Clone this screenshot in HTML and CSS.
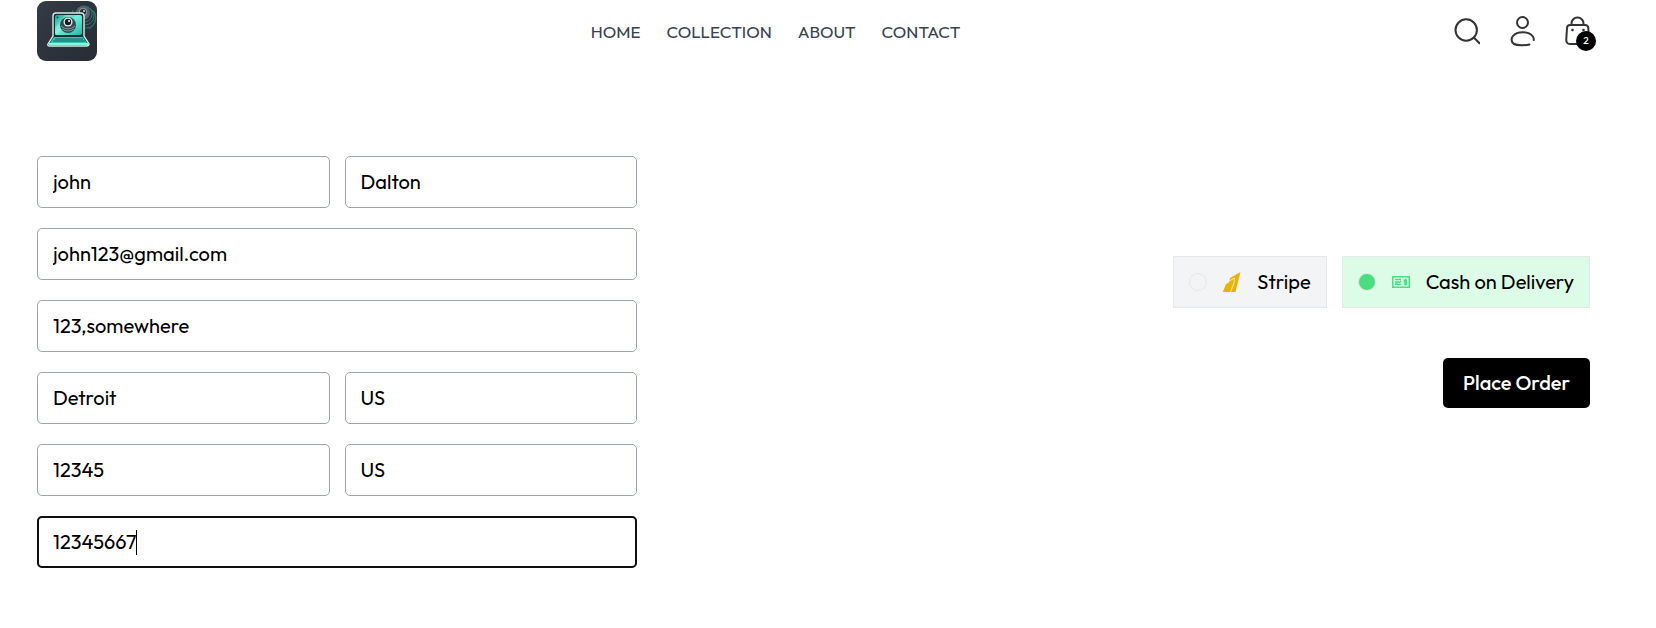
FILE: index.html
```html
<!DOCTYPE html>
<html lang="en">
<head>
<meta charset="utf-8">
<meta name="viewport" content="width=device-width, initial-scale=1">
<title>Place Order</title>
<link rel="stylesheet" href="styles.css">
</head>
<body>
<header class="header">
  <a class="logo" href="#" aria-label="Home">
    <svg viewBox="0 0 60 60" width="60" height="60" aria-hidden="true">
      <defs>
        <linearGradient id="tile" x1="0" y1="0" x2="1" y2="1"><stop offset="0" stop-color="#343b44"/><stop offset="1" stop-color="#272c35"/></linearGradient>
        <linearGradient id="screen" x1="0" y1="0" x2="1" y2="1"><stop offset="0" stop-color="#1fa294"/><stop offset=".45" stop-color="#6df0d8"/><stop offset="1" stop-color="#23b5a4"/></linearGradient>
      </defs>
      <rect width="60" height="60" rx="9" fill="url(#tile)"/>
      <g fill="none" stroke="#2c7473" stroke-width="1">
        <circle cx="47" cy="13" r="8"/><circle cx="48" cy="15" r="9"/><circle cx="49" cy="17" r="10"/><path d="M36 9a10 10 0 0 0 5 14M57 10c3 7 1 15-5 18"/>
      </g>
      <circle cx="46" cy="12" r="7" fill="#59636b"/><circle cx="46" cy="11" r="4" fill="#8d979c"/><circle cx="46" cy="11" r="3" fill="#20262d"/><circle cx="47" cy="10" r="1" fill="#dce4e5"/>
      <path d="M19 12h25q3 0 3 3v20l5 8q0 2-3 2H13q-3 0-2-2l5-8V15q0-3 3-3z" fill="#172c32" stroke="#d5eee9" stroke-width="1.4"/>
      <rect x="18" y="14" width="27" height="20" rx="2" fill="url(#screen)"/>
      <path d="M28 14h7L20 34h-2v-7z" fill="#a2f7e7" opacity=".4"/>
      <path d="M17 36h29l4 6H13z" fill="#32c8b4"/><path d="M18 38h28M16 40h32" stroke="#17595a" stroke-width="1"/>
      <path d="M12 43h39" stroke="#8cf3df" stroke-width="2"/>
      <circle cx="31" cy="24" r="8" fill="#344850"/><path d="M24 25q7 6 14 0M25 28q6 4 12 0" fill="none" stroke="#819b9d"/>
      <circle cx="31" cy="21" r="4.5" fill="#eaf3ef"/><circle cx="31" cy="21" r="3.2" fill="#111e2a"/><circle cx="32" cy="20" r="1" fill="#fff"/><circle cx="20.500" cy="16.500" r="1" fill="#0d5754"/>
    </svg>
  </a>
  <nav class="nav" aria-label="Main">
    <a href="#">HOME</a><a href="#">COLLECTION</a><a href="#">ABOUT</a><a href="#">CONTACT</a>
  </nav>
  <div class="actions">
    <button class="icon-button" type="button" aria-label="Search">
      <svg viewBox="-1 0 26 32" width="26" height="32"><circle cx="11.200" cy="15" r="10.700"/><path d="m18.800 22.500 5.700 5.700"/></svg>
    </button>
    <button class="icon-button" type="button" aria-label="Account">
      <svg viewBox="-1 -1 26 32" width="26" height="32"><circle cx="12.500" cy="6.500" r="5.500"/><path d="M19.500 28.500c-4 1-12.500 1-15.500-.5-3-1.500-3-6-1-8 4-5 15.500-5 19.500 0q1.500 1.800 1.200 4"/></svg>
    </button>
    <a class="icon-button cart" href="#" aria-label="Cart, 2 items">
      <svg viewBox="-1 -1 26 32" width="26" height="32"><path d="M6.500 9V7.500a6 6 0 0 1 12 0V9M5 9h15q3 0 3.300 3l.7 11q.2 5-4 5H5q-4 0-3.700-5L2 12q.2-3 3-3z"/><circle class="dot" cx="7.500" cy="14" r="1.300"/><circle class="dot" cx="18.500" cy="14" r="1.300"/></svg>
      <span class="badge">2</span>
    </a>
  </div>
</header>
<main>
  <form class="checkout">
    <div class="fields">
      <input aria-label="First name" value="john">
      <input aria-label="Last name" value="Dalton">
      <input class="wide" type="email" aria-label="Email" value="john123@gmail.com">
      <input class="wide" aria-label="Street" value="123,somewhere">
      <input aria-label="City" value="Detroit">
      <input aria-label="State" value="US">
      <input aria-label="Zip code" value="12345">
      <input aria-label="Country" value="US">
      <div class="wide phone-field">
        <input class="phone" type="tel" aria-label="Phone" value="12345667" autofocus>
        <span class="caret"></span>
      </div>
    </div>
    <div class="payment">
      <div class="methods">
        <label class="method">
          <input type="radio" name="method">
          <svg viewBox="0 0 20 20" width="20" height="20" aria-hidden="true"><path fill="#eab308" d="M18.500 0 13.500 20H.800L4 12l3-1.500L8 6z"/><path d="m6.500 9.500 6-3.500-.5 5-3.500 9" fill="none" stroke="#f9e9b7" stroke-width="1"/></svg>
          <span>Stripe</span>
        </label>
        <label class="method">
          <input type="radio" name="method" checked>
          <svg viewBox="0 0 20 20" width="20" height="20" aria-hidden="true" fill="none" stroke="#4ade80" stroke-width="1.500"><path d="M1.700 4.700h16.600v10.600H1.700z"/><path d="M4 7.500h6M4 10h4M4 12.700l2-1 1 1 3-.5M10 9l-2 2"/><path d="M16 8.200h-2.500v1.700h2v2H13M14.600 6.500v7"/></svg>
          <span>Cash on Delivery</span>
        </label>
      </div>
      <button class="submit" type="submit">Place Order</button>
    </div>
  </form>
</main>
<script>
  const phone = document.querySelector('.phone');
  phone.focus();
  phone.setSelectionRange(phone.value.length, phone.value.length);
</script>
</body>
</html>
```
FILE: styles.css
```css
* { box-sizing: border-box; }
body {
  margin: 0;
  background: #fff;
  color: #000;
  font-family: Outfit, Lato, "Open Sans", sans-serif;
  font-size: 20px;
  line-height: 30px;
}
button, input { font: inherit; color: inherit; }
a { color: inherit; text-decoration: none; }
svg { display: block; flex: none; }
.header {
  display: flex;
  align-items: center;
  justify-content: space-between;
  padding: 1px 66px 1px 37px;
}
.nav {
  display: flex;
  gap: 26px;
  padding-top: 2px;
  color: #374151;
  font-size: 17px;
}
.actions { display: flex; gap: 29px; }
.icon-button {
  position: relative;
  padding: 0;
  border: 0;
  background: none;
  cursor: pointer;
}
.icon-button svg {
  fill: none;
  stroke: #333;
  stroke-width: 2;
  stroke-linecap: round;
  stroke-linejoin: round;
}
.icon-button .dot { fill: #333; stroke: none; }
.badge {
  position: absolute;
  right: -6px;
  bottom: -4px;
  width: 20px;
  border-radius: 50%;
  background: #000;
  color: #fff;
  font-size: 10px;
  font-weight: 500;
  line-height: 20px;
  text-align: center;
}
.checkout {
  display: flex;
  flex-wrap: wrap;
  justify-content: space-between;
  gap: 20px;
  padding: 94px 66px 60px 37px;
}
.fields {
  display: grid;
  grid-template-columns: 1fr 1fr;
  gap: 20px 15px;
  width: 100%;
  max-width: 600px;
}
.fields input {
  width: 100%;
  min-width: 0;
  padding: 10px 15px;
  border: 1px solid #9ca3af;
  border-radius: 5px;
  background: #fff;
}
.fields .wide { grid-column: 1 / -1; }
.fields input:focus {
  outline: 2px solid #101010;
  outline-offset: -2px;
}
.phone-field {
  display: flex;
  position: relative;
}
.phone { caret-color: transparent; }
.caret {
  position: absolute;
  top: 14px;
  left: 99px;
  width: 1px;
  height: 25px;
  background: #000;
}
.payment {
  display: flex;
  flex-direction: column;
  align-items: flex-end;
  gap: 50px;
  padding-top: 100px;
}
.methods { display: flex; flex-wrap: wrap; gap: 15px; }
.method {
  display: flex;
  align-items: center;
  gap: 15px;
  padding: 10px 15px;
  border: 1px solid #e5e7eb;
  background: #f3f4f6;
  cursor: pointer;
}
.method:has(:checked) { background: #dcfce7; }
.method input {
  appearance: none;
  width: 18px;
  height: 18px;
  margin: 0;
  border: 1px solid #e5e7eb;
  border-radius: 50%;
}
.method input:checked { background: #4ade80; }
.submit {
  padding: 10px 20px;
  border: 0;
  border-radius: 5px;
  background: #000;
  color: #fff;
  font-weight: 500;
  cursor: pointer;
}
```
